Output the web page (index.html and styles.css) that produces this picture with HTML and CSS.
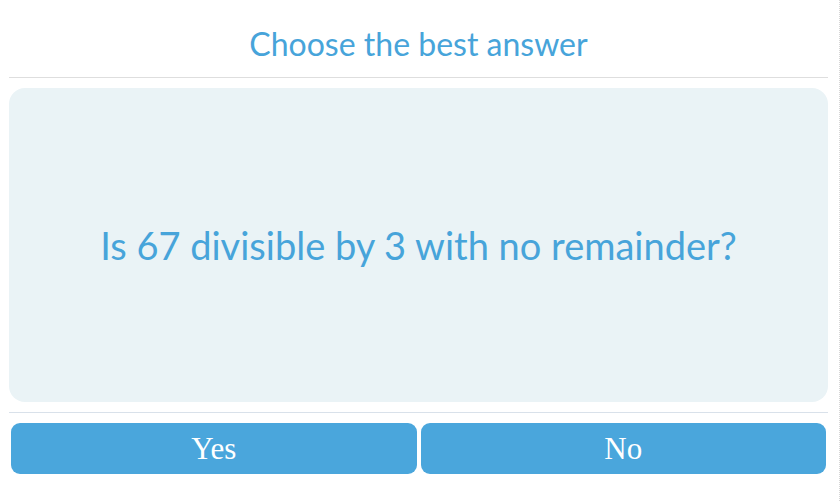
FILE: index.html
```html
<!DOCTYPE html>
<html lang="en">
<head>
  <meta charset="UTF-8" />
  <meta name="viewport" content="width=device-width, initial-scale=1.0" />
  <title>Quiz</title>
  <link rel="stylesheet" href="styles.css">
</head>
<body>
  <div class="quiz">
    <!-- heading -->
    <div class="quiz-head">
      <h1>Choose the best answer</h1>
    </div>

    <!-- question card -->
    <div class="question">
      <p>Is 67 divisible by 3 with no remainder?</p>
    </div>

    <!-- answers -->
    <div class="answers">
      <button class="answer">Yes</button>
      <button class="answer">No</button>
    </div>
  </div>
</body>
</html>
```

FILE: styles.css
```css
body {
  margin: 0;
  padding: 0;
  background: #fff;
  font-family: 'Lato', 'Noto Sans', sans-serif;
}
.quiz {
  box-sizing: border-box;
  width: 840px;
  height: 501px;
  padding: 0 11px 0 9px;
  border-right: 1px dotted #d6d6d6;
}
.quiz-head {
  height: 77px;
  border-bottom: 1px solid #dedede;
  display: flex;
  align-items: center;
  justify-content: center;
}
.quiz-head h1 {
  margin: 10px 0 0;
  font-size: 32px;
  font-weight: normal;
  color: #47a4da;
}
.question {
  margin-top: 10px;
  height: 314px;
  border-radius: 16px;
  background-color: #eaf3f6;
  display: flex;
  align-items: center;
  justify-content: center;
}
.question p {
  margin: 0;
  font-size: 38px;
  color: #47a4da;
}
.answers {
  margin-top: 10px;
  border-top: 1px solid #d9e1ea;
  padding-top: 8px;
  display: flex;
}
.answer {
  flex: 1;
  margin: 2px;
  height: 51px;
  border: none;
  border-radius: 9px;
  background-color: #4aa6dc;
  color: #fff;
  font-family: 'Liberation Serif', serif;
  font-size: 31px;
  cursor: pointer;
}
```
